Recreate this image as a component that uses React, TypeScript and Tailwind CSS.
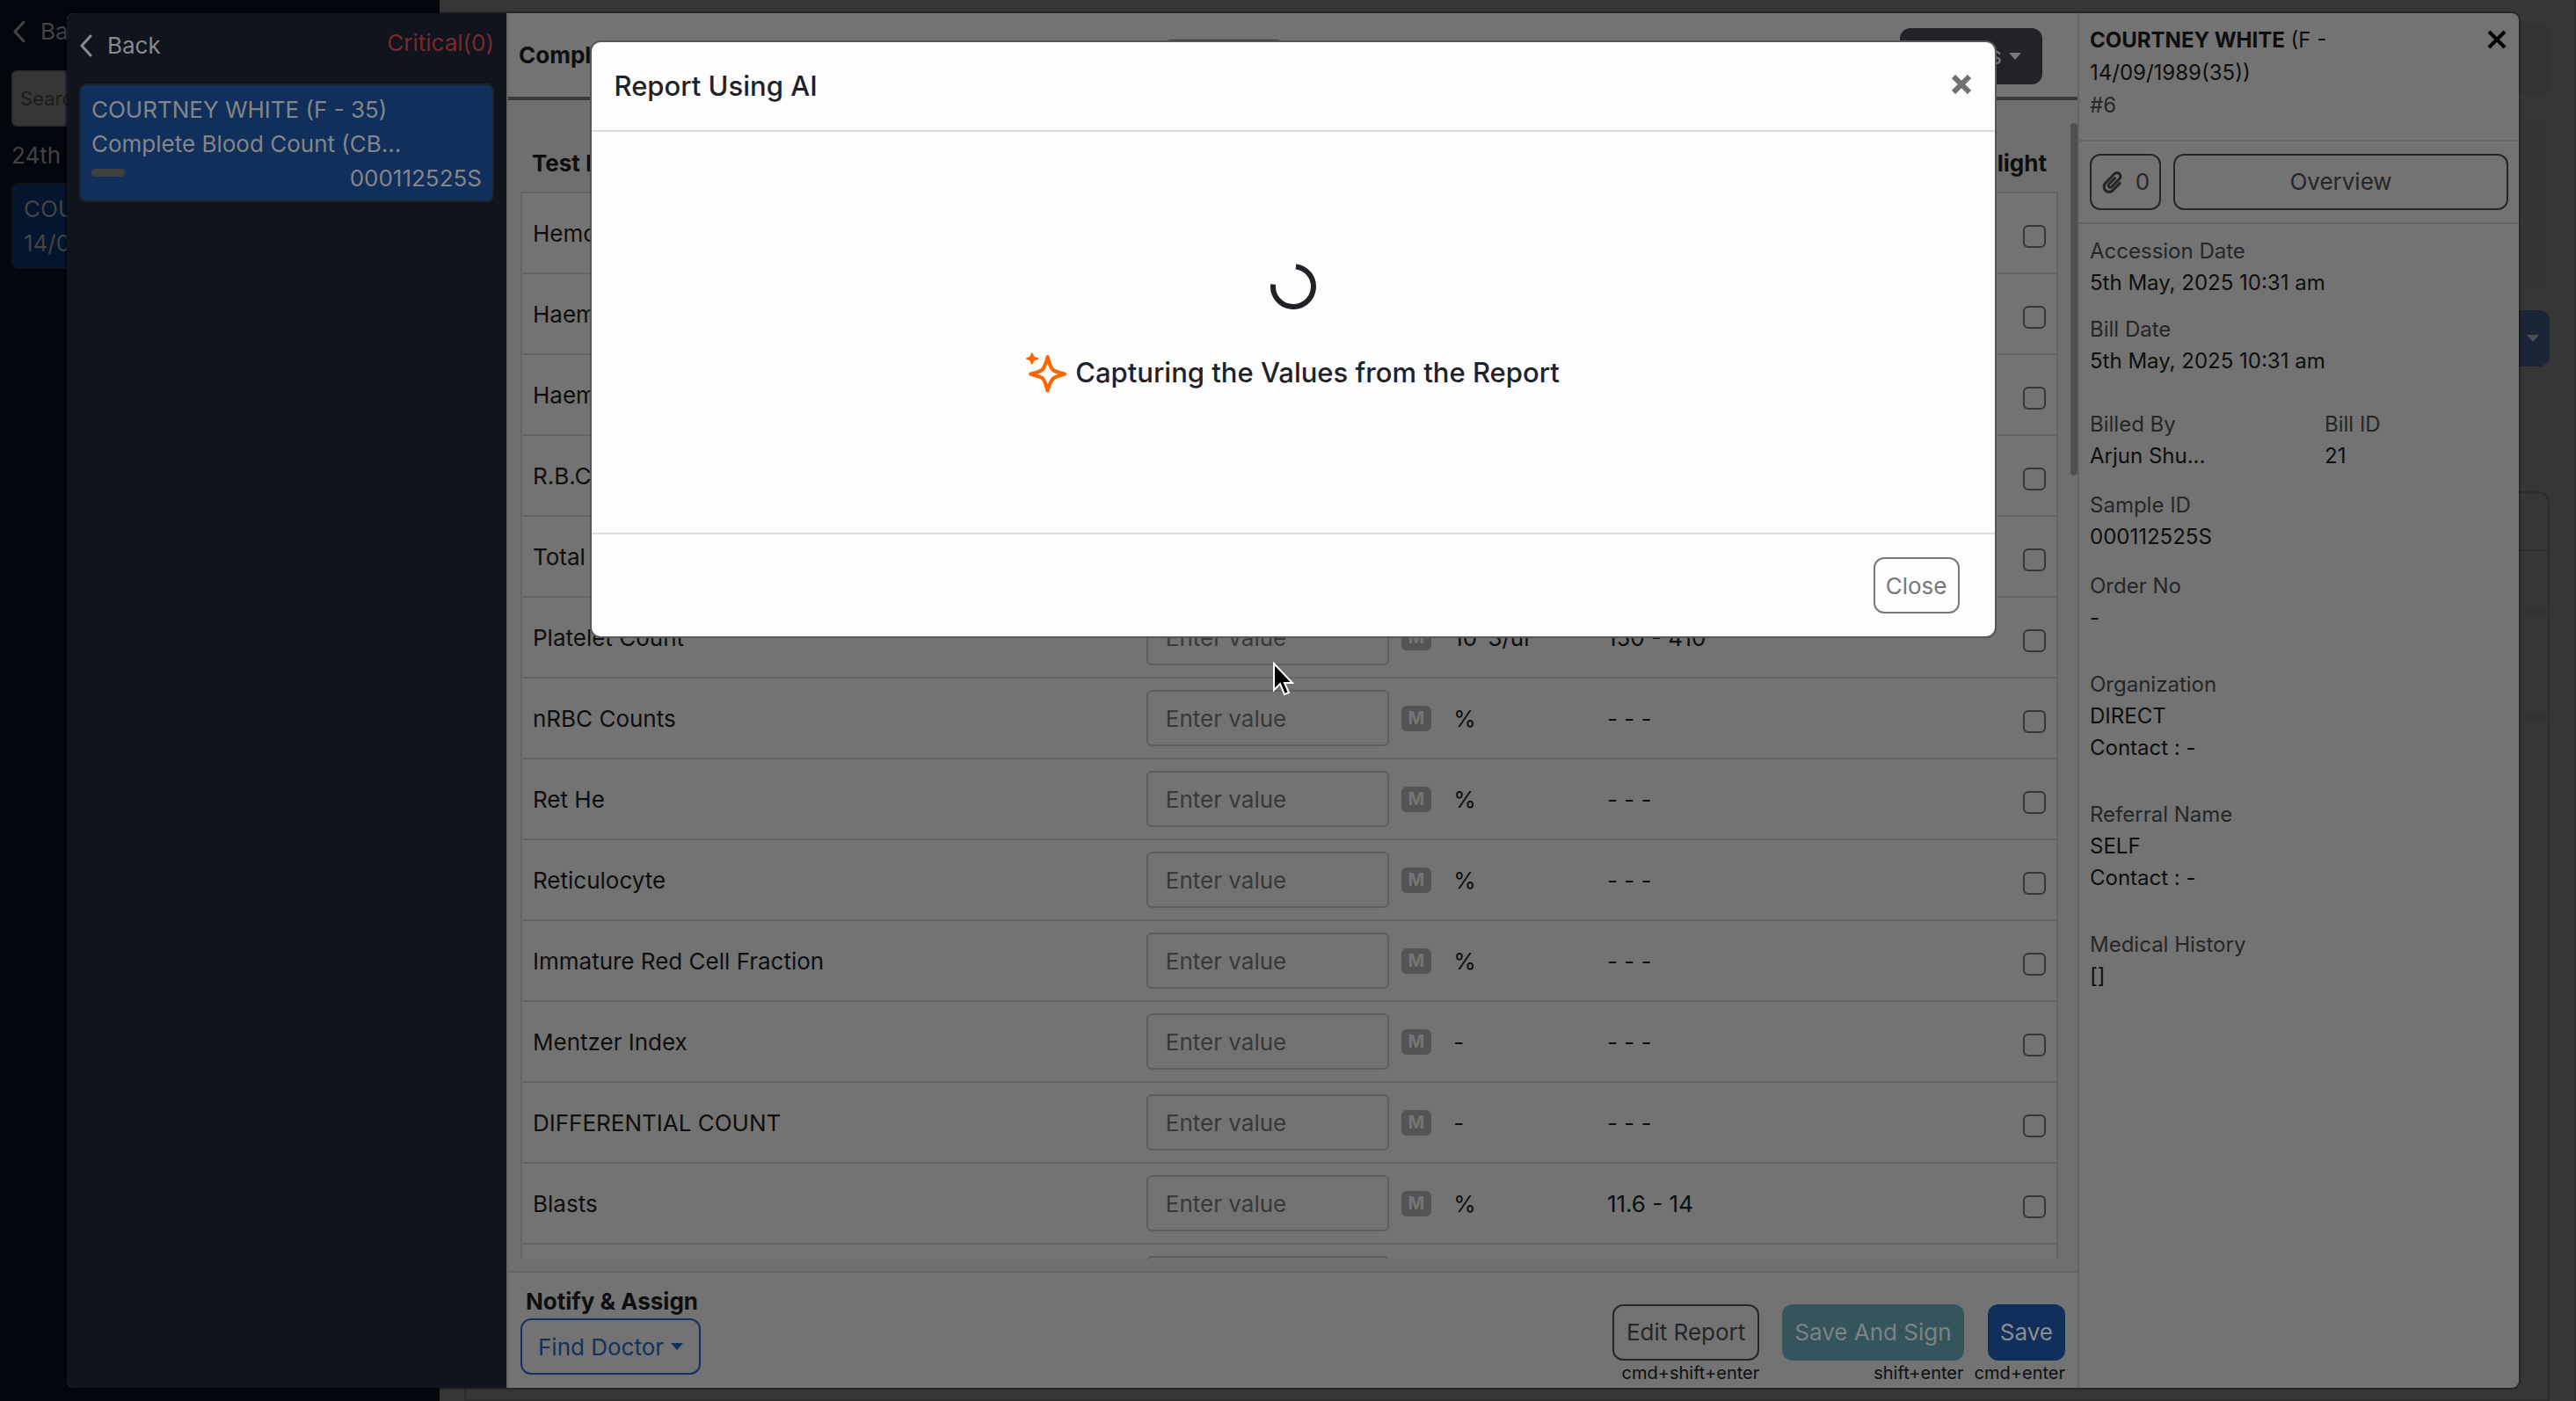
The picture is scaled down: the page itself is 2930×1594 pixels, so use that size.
import React from 'react';
import { FaPaperclip } from 'react-icons/fa';

const tests = [
  { name: 'Hemoglobin', unit: 'g/dl', range: '13 - 17' },
  { name: 'Haematocrit', unit: '%', range: '40 - 50' },
  { name: 'Haematocrit Value', unit: '%', range: '40 - 50' },
  { name: 'R.B.C. Count', unit: '10^6/ul', range: '4.5 - 5.5' },
  { name: 'Total W.B.C. Count', unit: '10^3/ul', range: '4 - 10' },
  { name: 'Platelet Count', unit: '10^3/ul', range: '150 - 410' },
  { name: 'nRBC Counts', unit: '%', range: '- - -' },
  { name: 'Ret He', unit: '%', range: '- - -' },
  { name: 'Reticulocyte', unit: '%', range: '- - -' },
  { name: 'Immature Red Cell Fraction', unit: '%', range: '- - -' },
  { name: 'Mentzer Index', unit: '-', range: '- - -' },
  { name: 'DIFFERENTIAL COUNT', unit: '-', range: '- - -' },
  { name: 'Blasts', unit: '%', range: '11.6 - 14' },
  { name: '', unit: '', range: '' },
];

const Chevron: React.FC = () => (
  <svg width="16" height="26" viewBox="0 0 16 26" fill="none" stroke="currentColor" strokeWidth="3" strokeLinecap="round" strokeLinejoin="round">
    <path d="M13 2 3 13l10 11" />
  </svg>
);

const Caret: React.FC = () => (
  <svg width="14" height="8" viewBox="0 0 14 8" fill="currentColor">
    <path d="M0 0h14L7 8z" />
  </svg>
);

const Cross: React.FC<{ weight: number }> = ({ weight }) => (
  <svg width="22" height="22" viewBox="0 0 22 22" stroke="currentColor" strokeWidth={weight}>
    <path d="M2 2l18 18M20 2L2 20" />
  </svg>
);

const Sparkle: React.FC = () => (
  <svg width="46" height="46" viewBox="0 0 44 44" className="text-[#fd6500]">
    <path
      d="M23.500 5C25.500 13 27 17.500 30 19.500C33 21.300 37 22 42 23.500C37 25 33 26 30 28C27 30.500 25.500 34.500 23.500 41.500C21.500 34.500 20.500 30 18 28C15 26 10 25 5 23.500C10 22 15 21 18 18.500C20.500 16 21.500 12 23.500 5Z"
      fill="none"
      stroke="currentColor"
      strokeWidth="4"
      strokeLinejoin="round"
    />
    <path d="M6.500 1.500C7.200 4.500 8 5.600 12.500 6.700C8 7.900 7.200 9 6.500 12C5.800 9 5 7.900 1 6.700C5 5.600 5.800 4.500 6.500 1.500Z" fill="currentColor" stroke="currentColor" strokeWidth="2" strokeLinejoin="round" />
  </svg>
);

const Spinner: React.FC = () => (
  <svg width="52" height="52" viewBox="0 0 52 52" fill="none" stroke="#212228" strokeWidth="6" role="status" aria-label="Loading">
    <path d="M29 3.200A23 23 0 1 1 3.100 23.500" />
  </svg>
);

// Worklist that stays behind the open report
const Worklist: React.FC = () => (
  <div className="flex min-h-screen">
    <aside className="w-[500px] shrink-0 bg-[#03060d] text-[#434346]">
      <a href="#" className="flex items-center gap-4 px-3.5 pt-4 leading-10">
        <Chevron />
        Back
      </a>
      <div className="px-[13px]">
        <input
          type="text"
          aria-label="Search"
          placeholder="Search"
          className="mt-6 h-16 w-full rounded-md border-2 border-[#2c2c2d] bg-[#363636] px-2 text-[22px] placeholder:text-[#1b1b1c]"
        />
        <p className="pt-3.5 leading-[38px]">24th Apr, 2025</p>
        <div className="mt-3 rounded-lg border-2 border-[#101419] bg-[#04152e] px-3 py-2 leading-[39px]">
          <p>COURTNEY WHITE</p>
          <p>14/09/1989</p>
        </div>
      </div>
    </aside>
    <main className="flex flex-1 flex-col border-r-2 border-[#303030] bg-[#363636] px-7 pt-[26px]">
      <div className="h-[82px] rounded-lg bg-[#333333]" />
      <div className="mt-[26px] h-[193px] rounded-lg border border-[#343434] bg-[#353535]" />
      <button type="button" aria-label="Options" className="mt-[26px] flex h-16 w-[180px] items-center justify-end self-end rounded-xl bg-[#1a2538] px-3 text-[#4c4f54]">
        <Caret />
      </button>
      <div className="mt-[142px] flex-1 rounded-t-xl border-2 border-[#2c2c2c]">
        <div className="h-[66px] border-b-2 border-[#2c2c2c]" />
        <div className="h-[70px] border-b-2 border-[#303030]" />
        <div className="h-[120px] border-b-2 border-[#303030]" />
      </div>
    </main>
  </div>
);

const SampleList: React.FC = () => (
  <aside className="w-[500px] shrink-0 bg-[#10141c] px-3.5 text-[#858588]">
    <div className="flex items-center justify-between pt-3.5 leading-10">
      <button type="button" className="flex items-center gap-4 pt-0.5 text-[#8a8a8c]">
        <Chevron />
        Back
      </button>
      <span className="pb-1 text-[#792a30]">Critical(0)</span>
    </div>
    <div className="mt-[22px] rounded-lg border-2 border-[#1d2228] bg-[#112f5b] px-3 pt-2 pb-1.5 leading-[39px]">
      <p>COURTNEY WHITE (F - 35)</p>
      <p>Complete Blood Count (CB...</p>
      <div className="flex justify-between">
        <span className="mt-[9px] h-[9px] w-[38px] rounded bg-[#3f3f40]" />
        <span>000112525S</span>
      </div>
    </div>
  </aside>
);

const ReportTable: React.FC = () => (
  <table className="w-full table-fixed border-collapse text-left">
    <thead>
      <tr className="h-[79px]">
        <th className="w-[40%] px-3 pt-3">Test Name</th>
        <th className="w-[20%] px-3 pt-3">Value</th>
        <th className="w-[10%] px-3 pt-3">Unit</th>
        <th className="w-[15%] px-3 pt-3">Range</th>
        <th className="w-[15%] px-3 pt-3 text-right">Highlight</th>
      </tr>
    </thead>
    <tbody className="border-2 border-[#646468] bg-[#737373]">
      {tests.map((test) => (
        <tr key={test.name} className="h-[92px] border-t-2 border-[#646468]">
          <td className="px-3">{test.name}</td>
          <td className="px-3">
            <div className="flex items-center gap-3.5">
              <input
                type="text"
                aria-label={test.name || 'Value'}
                placeholder={test.name && 'Enter value'}
                className="h-16 w-[276px] rounded-md border-2 border-[#5d5f64] px-5 placeholder:text-[#393939]"
              />
              {test.name && (
                <span className="flex h-[29px] w-[34px] items-center justify-center rounded-md bg-[#555355] text-xl font-bold text-[#757575]">M</span>
              )}
            </div>
          </td>
          <td className="px-3">{test.unit}</td>
          <td className="px-3">{test.range}</td>
          <td className="px-3">
            <input
              type="checkbox"
              aria-label={`Highlight ${test.name}`}
              className="mt-2 ml-auto block size-[26px] appearance-none rounded-md border-2 border-[#373737]"
            />
          </td>
        </tr>
      ))}
    </tbody>
  </table>
);

const ReportFooter: React.FC = () => (
  <footer className="flex items-start justify-between border-t-2 border-[#646468] bg-[#737373] px-3.5">
    <div className="pt-3.5 pb-[15px]">
      <p className="pl-1.5 leading-[38px] font-bold">Notify &amp; Assign</p>
      <button type="button" className="flex h-16 items-center gap-2 rounded-xl border-2 border-[#113263] px-[18px] text-[#11315f]">
        Find Doctor
        <Caret />
      </button>
    </div>
    <div className="flex pt-9 text-right text-xl leading-7">
      <div>
        <button type="button" className="ml-auto block h-16 rounded-xl border-2 border-[#262629] px-3.5 text-[26px] text-[#262629]">
          Edit Report
        </button>
        cmd+shift+enter
      </div>
      <div className="ml-[26px]">
        <button type="button" className="block h-16 rounded-xl bg-[#34555b] px-3.5 text-[26px] text-[#7c8384]">
          Save And Sign
        </button>
        shift+enter
      </div>
      <div className="ml-3">
        <button type="button" className="ml-auto block h-16 rounded-xl bg-[#112f5b] px-3.5 text-[26px] text-[#8a8d92]">
          Save
        </button>
        cmd+enter
      </div>
    </div>
  </footer>
);

const Detail: React.FC<{ label: string; lines: string[]; className?: string }> = ({ label, lines, className }) => (
  <div className={className}>
    <dt className="text-[#262628]">{label}</dt>
    {lines.map((line) => (
      <dd key={line}>{line}</dd>
    ))}
  </div>
);

const PatientPanel: React.FC = () => (
  <aside className="w-[502px] shrink-0 border-l-2 border-[#646468] text-2xl leading-[36px]">
    <div className="flex h-[146px] items-start justify-between border-b-2 border-[#646468] pt-3 pr-3.5 pl-3">
      <div className="w-[330px] leading-[37px]">
        <p>
          <b>COURTNEY WHITE</b> (F - 14/09/1989(35))
        </p>
        <p className="text-[#262628]">#6</p>
      </div>
      <button type="button" aria-label="Close report" className="mt-[7px] text-black">
        <Cross weight={4} />
      </button>
    </div>
    <div className="flex gap-3.5 border-b-2 border-[#646468] px-3 py-3.5 text-[26px] text-[#262629]">
      <button type="button" className="flex h-16 w-[81px] items-center justify-center gap-3.5 rounded-xl border-2 border-[#262629]">
        <FaPaperclip size={25} />0
      </button>
      <button type="button" className="h-16 flex-1 rounded-xl border-2 border-[#262629]">
        Overview
      </button>
    </div>
    <dl className="px-3 pt-[13px]">
      <Detail label="Accession Date" lines={['5th May, 2025 10:31 am']} />
      <Detail label="Bill Date" lines={['5th May, 2025 10:31 am']} className="mt-[17px]" />
      <div className="mt-9 flex">
        <Detail label="Billed By" lines={['Arjun Shu...']} className="w-[267px]" />
        <Detail label="Bill ID" lines={['21']} />
      </div>
      <Detail label="Sample ID" lines={['000112525S']} className="mt-5" />
      <Detail label="Order No" lines={['-']} className="mt-5" />
      <Detail label="Organization" lines={['DIRECT', 'Contact : -']} className="mt-10" />
      <Detail label="Referral Name" lines={['SELF', 'Contact : -']} className="mt-10" />
      <Detail label="Medical History" lines={['[]']} className="mt-10" />
    </dl>
  </aside>
);

const AiReportDialog: React.FC = () => (
  <div className="absolute inset-x-0 top-[31px] flex justify-center">
    <div role="dialog" aria-labelledby="dialog-title" className="w-[1600px] rounded-xl border-2 border-[#565656] bg-[#fdfdfd] text-[#212228]">
      <header className="flex h-[102px] items-center justify-between border-b-2 border-[#dadbde] pr-[27px] pl-[26px]">
        <h2 id="dialog-title" className="text-[31px] font-medium">Report Using AI</h2>
        <button type="button" aria-label="Close dialog" className="pb-1 text-[#717171]">
          <Cross weight={6} />
        </button>
      </header>
      <div className="flex h-[456px] flex-col items-center pt-[150px]">
        <Spinner />
        <p className="mt-12 flex items-center gap-2.5 text-[31px] leading-[48px] font-medium">
          <Sparkle />
          Capturing the Values from the Report
        </p>
      </div>
      <footer className="flex justify-end border-t-2 border-[#dadbde] py-[26px] pr-10">
        <button type="button" className="h-16 rounded-xl border-2 border-[#77787b] px-3 text-[#77787b]">
          Close
        </button>
      </footer>
    </div>
  </div>
);

const App: React.FC = () => (
  <div className="relative h-screen overflow-hidden font-[Inter,sans-serif] text-[26px] text-[#0e0e0e]">
    <Worklist />

    <div className="absolute inset-y-[15px] right-[65px] left-[76px] flex overflow-hidden rounded-lg bg-[#737373] ring-2 ring-black/30">
      <SampleList />
      <section className="flex min-w-0 flex-1 flex-col border-l-2 border-[#646468]">
        <header className="flex h-[99px] shrink-0 items-center border-b-4 border-[#3a3a3a] pr-10 pl-3">
          <h1 className="w-[737px] font-bold">Complete Blood Count</h1>
          <div className="h-9 w-[130px] rounded bg-[#3a3a3a]" />
          <button type="button" className="mb-[-2px] ml-auto flex h-16 items-center gap-2 rounded-xl bg-[#222327] px-6 text-[#77787a]">
            Actions
            <Caret />
          </button>
        </header>
        <div className="flex min-h-0 flex-1 flex-col bg-[#6f6f6f] pt-[26px] pb-[13px]">
          <div className="flex min-h-0 flex-1 gap-3.5 pl-3.5">
            <div className="min-w-0 flex-1 overflow-hidden">
              <ReportTable />
            </div>
            <div className="h-[401px] w-2 rounded bg-[#505050]" />
          </div>
        </div>
        <ReportFooter />
      </section>
      <PatientPanel />
      <AiReportDialog />
    </div>

    {/* Mouse pointer */}
    <svg width="26" height="40" viewBox="0 0 26 40" className="absolute top-[753px] left-[1447px]">
      <path d="M2 2v30l7-7 5 12 5-2-5-11h9z" fill="#000" stroke="#fff" strokeWidth="2" />
    </svg>
  </div>
);

export default App;
